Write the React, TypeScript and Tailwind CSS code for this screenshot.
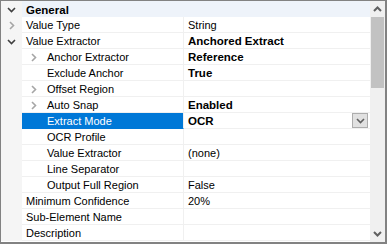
import React from "react";

type Row = {
    name: string;
    value?: string;
    bold?: boolean;
    level?: 0 | 1;
    toggle?: "open" | "closed";
    selected?: boolean;
};

const rows: Row[] = [
    { name: "Value Type", value: "String", toggle: "closed" },
    { name: "Value Extractor", value: "Anchored Extract", bold: true, toggle: "open" },
    { name: "Anchor Extractor", value: "Reference", bold: true, level: 1, toggle: "closed" },
    { name: "Exclude Anchor", value: "True", bold: true, level: 1 },
    { name: "Offset Region", level: 1, toggle: "closed" },
    { name: "Auto Snap", value: "Enabled", bold: true, level: 1, toggle: "closed" },
    { name: "Extract Mode", value: "OCR", bold: true, level: 1, selected: true },
    { name: "OCR Profile", level: 1 },
    { name: "Value Extractor", value: "(none)", level: 1 },
    { name: "Line Separator", level: 1 },
    { name: "Output Full Region", value: "False", level: 1 },
    { name: "Minimum Confidence", value: "20%" },
    { name: "Sub-Element Name" },
    { name: "Description" },
];

const Open = ({ color = "#404040" }: { color?: string }) => (
    <svg width="9" height="6" viewBox="0 0 9 6">
        <polyline points="1,1 4.5,4.5 8,1" fill="none" stroke={color} strokeWidth="1.6" />
    </svg>
);

const Closed = () => (
    <svg width="6" height="9" viewBox="0 0 6 9">
        <polyline points="1,1 4.5,4.5 1,8" fill="none" stroke="#a6a6a6" strokeWidth="1.6" />
    </svg>
);

const PropertyRow = ({ row }: { row: Row }) => {
    const nested = row.level === 1;
    return (
        <div className="flex h-[16px]">
            {/* margin */}
            <div className="w-[21px] bg-[#f5f5f5] flex items-center justify-center pt-[1px]">
                {!nested && row.toggle === "open" && <Open />}
                {!nested && row.toggle === "closed" && <Closed />}
            </div>
            {/* name */}
            <div
                className={`w-[162px] flex items-center pt-[2px] border-b border-r border-[#f0f0f0] ${
                    row.selected ? "bg-[#0078d7] text-white border-b-[#0078d7]" : "text-black"
                } ${nested ? "pl-[25px]" : "pl-[4px]"} relative`}
            >
                {nested && row.toggle === "closed" && (
                    <span className="absolute left-[9px] top-[4px] flex">
                        <Closed />
                    </span>
                )}
                <span className="leading-[13px] whitespace-nowrap">{row.name}</span>
            </div>
            {/* value */}
            <div className="flex-1 flex items-center justify-between border-b border-[#f0f0f0] pl-[4px] pr-[2px]">
                <span
                    className={`leading-[13px] pt-[2px] whitespace-nowrap ${row.bold ? "font-bold text-[11.5px]" : ""}`}
                >
                    {row.value}
                </span>
                {row.selected && (
                    <div className="w-[16px] h-[15px] bg-[#e1e1e1] border border-[#adadad] flex items-center justify-center">
                        <Open color="#606060" />
                    </div>
                )}
            </div>
        </div>
    );
};

export default function App() {
    return (
        <div
            className="w-[387px] h-[244px] overflow-hidden bg-white flex border-l border-t border-r-2 border-b-2 border-[#828282] text-[11px] text-black"
            style={{ fontFamily: '"Liberation Sans", Arial, sans-serif' }}
        >
            <div className="flex-1 flex flex-col">
                {/* category header */}
                <div className="flex h-[16px]">
                    <div className="w-[21px] bg-[#f5f5f5] flex items-center justify-center pt-[1px]">
                        <Open />
                    </div>
                    <div className="flex-1 bg-[#eef3fa] flex items-center pt-[2px] pl-[4px] font-bold text-[11.5px] leading-[13px]">
                        General
                    </div>
                </div>
                {rows.map((row, i) => (
                    <PropertyRow key={i} row={row} />
                ))}
            </div>

            {/* scrollbar */}
            <div className="w-[15px] bg-[#f0f0f0] flex flex-col items-center">
                <div className="h-[16px] w-full flex items-center justify-center">
                    <svg width="9" height="6" viewBox="0 0 9 6">
                        <polyline points="1,5 4.5,1.5 8,5" fill="none" stroke="#606060" strokeWidth="2" />
                    </svg>
                </div>
                <div className="w-[13px] h-[71px] bg-[#c2c2c2]" />
                <div className="flex-1" />
                <div className="h-[16px] w-full flex items-center justify-center">
                    <svg width="9" height="6" viewBox="0 0 9 6">
                        <polyline points="1,1 4.5,4.5 8,1" fill="none" stroke="#606060" strokeWidth="2" />
                    </svg>
                </div>
            </div>
        </div>
    );
}
